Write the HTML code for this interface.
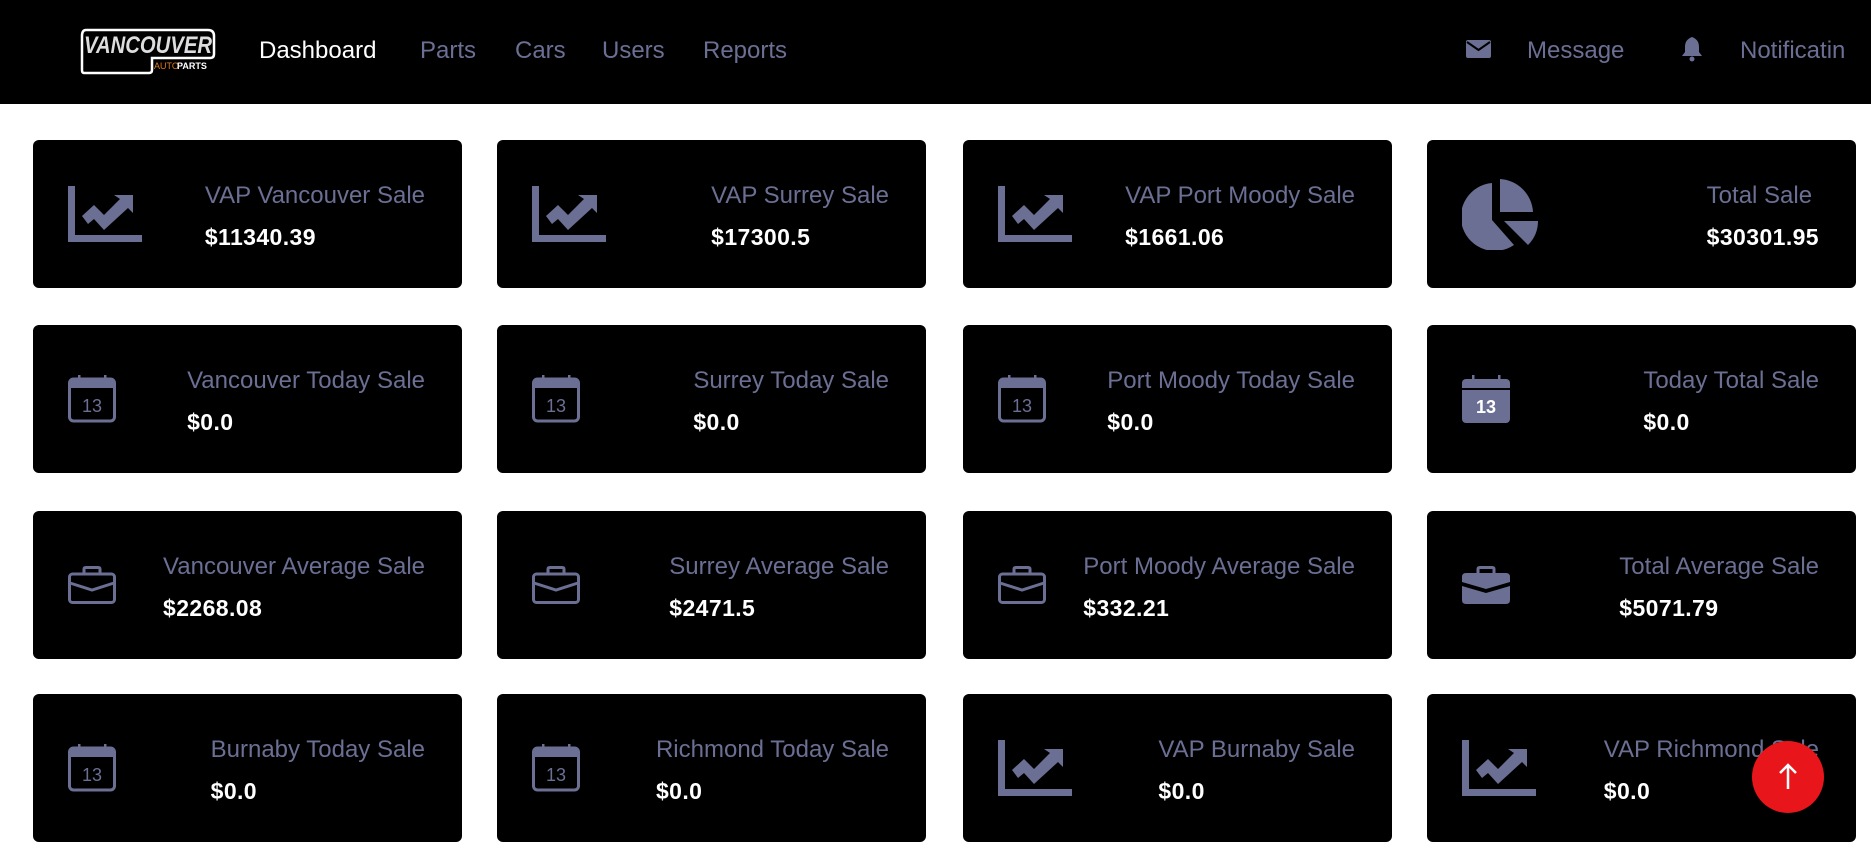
<!DOCTYPE html>
<html><head><meta charset="utf-8"><style>
*{margin:0;padding:0;box-sizing:border-box}
body{width:1871px;height:848px;background:#fff;font-family:"Liberation Sans",sans-serif;overflow:hidden;position:relative}
.nav{position:absolute;left:0;top:0;width:1871px;height:104px;background:#000}
.nav a{position:absolute;top:37px;font-size:24px;color:#6b6f93;text-decoration:none;white-space:nowrap}
.logo{position:absolute;left:80px;top:28px;width:136px;height:47px}
.card{position:absolute;width:429px;height:148px;background:#000;border-radius:6px}
.ic{position:absolute;left:35px;top:50%;transform:translateY(-50%)}
.tx{position:absolute;right:37px;top:42px}
.t{font-size:24px;color:#6b6f93;white-space:nowrap;line-height:28px}
.v{font-size:23px;font-weight:bold;color:#fff;margin-top:14px;letter-spacing:.4px}
.up{position:absolute;left:1752px;top:741px;width:72px;height:72px;border-radius:50%;background:#e8161b}
</style></head><body>
<div class="nav">
<svg class="logo" viewBox="0 0 136 47"><path d="M6 2H128Q134 2 134 8V26Q134 30 130 30H72V42Q72 45 69 45H4Q2 45 2 42V8Q2 2 6 2Z" fill="none" stroke="#fff" stroke-width="2.5"/><text x="68" y="25" text-anchor="middle" font-family="Liberation Sans" font-style="italic" font-weight="bold" font-size="24" fill="#ddd" textLength="128" lengthAdjust="spacingAndGlyphs">VANCOUVER</text><text x="74" y="41" font-family="Liberation Sans" font-size="9" fill="#e07a1e">AUTO</text><text x="97" y="41" font-family="Liberation Sans" font-weight="bold" font-size="9" fill="#fff">PARTS</text></svg>
<a style="left:259px;color:#fff">Dashboard</a>
<a style="left:420px">Parts</a>
<a style="left:515px">Cars</a>
<a style="left:602px">Users</a>
<a style="left:703px">Reports</a>
<svg style="position:absolute;left:1466px;top:40px" width="25" height="18" viewBox="0 0 25 18"><rect x="0" y="0" width="25" height="18" rx="2" fill="#6b6f93"/><path d="M1 2L12.5 10L24 2" fill="none" stroke="#000" stroke-width="2"/></svg>
<a style="left:1527px">Message</a>
<svg style="position:absolute;left:1681px;top:36px" width="22" height="26" viewBox="0 0 22 26"><path d="M11 1C6 3 4 6 4 11V16L1 20H21L18 16V11C18 6 16 3 11 1Z" fill="#6b6f93"/><circle cx="11" cy="23" r="2.5" fill="#6b6f93"/></svg>
<a style="left:1740px">Notificatin</a>
</div>

<!-- row 1 -->
<div class="card" style="left:33px;top:140px"><svg class="ic" width="74" height="56" viewBox="0 0 74 56"><path d="M0 0H7V49H74V56H0Z" fill="#6b6f93"/><path d="M14 30L26 19L36 29L52 13L46 9H65V27L60 22L36 44L26 33L20 38Z" fill="#6b6f93"/></svg><div class="tx"><div class="t">VAP Vancouver Sale</div><div class="v">$11340.39</div></div></div>
<div class="card" style="left:497px;top:140px"><svg class="ic" width="74" height="56" viewBox="0 0 74 56"><path d="M0 0H7V49H74V56H0Z" fill="#6b6f93"/><path d="M14 30L26 19L36 29L52 13L46 9H65V27L60 22L36 44L26 33L20 38Z" fill="#6b6f93"/></svg><div class="tx"><div class="t">VAP Surrey Sale</div><div class="v">$17300.5</div></div></div>
<div class="card" style="left:963px;top:140px"><svg class="ic" width="74" height="56" viewBox="0 0 74 56"><path d="M0 0H7V49H74V56H0Z" fill="#6b6f93"/><path d="M14 30L26 19L36 29L52 13L46 9H65V27L60 22L36 44L26 33L20 38Z" fill="#6b6f93"/></svg><div class="tx"><div class="t">VAP Port Moody Sale</div><div class="v">$1661.06</div></div></div>
<div class="card" style="left:1427px;top:140px"><svg class="ic" width="78" height="72" viewBox="0 0 78 72"><path d="M30 5A34 34 0 1 0 52 67L30 42Z" fill="#6b6f93"/><path d="M38 1A35 35 0 0 1 71 34H38Z" fill="#6b6f93"/><path d="M42 43H76A34 34 0 0 1 66 67Z" fill="#6b6f93"/></svg><div class="tx"><div class="t">Total Sale</div><div class="v">$30301.95</div></div></div>

<!-- row 2 -->
<div class="card" style="left:33px;top:325px"><svg class="ic" width="48" height="48" viewBox="0 0 48 48"><rect x="1.5" y="4" width="45" height="42" rx="4" fill="none" stroke="#6b6f93" stroke-width="3"/><rect x="1.5" y="4" width="45" height="9" fill="#6b6f93"/><rect x="10" y="0" width="2.5" height="5" fill="#6b6f93"/><rect x="36" y="0" width="2.5" height="5" fill="#6b6f93"/><text x="24" y="37" text-anchor="middle" font-family="Liberation Sans" font-size="18" fill="#6b6f93">13</text></svg><div class="tx"><div class="t">Vancouver Today Sale</div><div class="v">$0.0</div></div></div>
<div class="card" style="left:497px;top:325px"><svg class="ic" width="48" height="48" viewBox="0 0 48 48"><rect x="1.5" y="4" width="45" height="42" rx="4" fill="none" stroke="#6b6f93" stroke-width="3"/><rect x="1.5" y="4" width="45" height="9" fill="#6b6f93"/><rect x="10" y="0" width="2.5" height="5" fill="#6b6f93"/><rect x="36" y="0" width="2.5" height="5" fill="#6b6f93"/><text x="24" y="37" text-anchor="middle" font-family="Liberation Sans" font-size="18" fill="#6b6f93">13</text></svg><div class="tx"><div class="t">Surrey Today Sale</div><div class="v">$0.0</div></div></div>
<div class="card" style="left:963px;top:325px"><svg class="ic" width="48" height="48" viewBox="0 0 48 48"><rect x="1.5" y="4" width="45" height="42" rx="4" fill="none" stroke="#6b6f93" stroke-width="3"/><rect x="1.5" y="4" width="45" height="9" fill="#6b6f93"/><rect x="10" y="0" width="2.5" height="5" fill="#6b6f93"/><rect x="36" y="0" width="2.5" height="5" fill="#6b6f93"/><text x="24" y="37" text-anchor="middle" font-family="Liberation Sans" font-size="18" fill="#6b6f93">13</text></svg><div class="tx"><div class="t">Port Moody Today Sale</div><div class="v">$0.0</div></div></div>
<div class="card" style="left:1427px;top:325px"><svg class="ic" width="48" height="48" viewBox="0 0 48 48"><rect x="0" y="4" width="48" height="44" rx="4" fill="#6b6f93"/><rect x="0" y="13" width="48" height="2" fill="#000"/><rect x="10" y="0" width="2.5" height="5" fill="#6b6f93"/><rect x="36" y="0" width="2.5" height="5" fill="#6b6f93"/><text x="24" y="38" text-anchor="middle" font-family="Liberation Sans" font-weight="bold" font-size="18" fill="#fff">13</text></svg><div class="tx"><div class="t">Today Total Sale</div><div class="v">$0.0</div></div></div>

<!-- row 3 -->
<div class="card" style="left:33px;top:511px"><svg class="ic" width="48" height="38" viewBox="0 0 48 38"><rect x="1.5" y="8" width="45" height="28.5" rx="3" fill="none" stroke="#6b6f93" stroke-width="3"/><path d="M16 8V3Q16 1.5 18 1.5H30Q32 1.5 32 3V8" fill="none" stroke="#6b6f93" stroke-width="3"/><path d="M2 17L24 24L46 17" fill="none" stroke="#6b6f93" stroke-width="3"/></svg><div class="tx"><div class="t">Vancouver Average Sale</div><div class="v">$2268.08</div></div></div>
<div class="card" style="left:497px;top:511px"><svg class="ic" width="48" height="38" viewBox="0 0 48 38"><rect x="1.5" y="8" width="45" height="28.5" rx="3" fill="none" stroke="#6b6f93" stroke-width="3"/><path d="M16 8V3Q16 1.5 18 1.5H30Q32 1.5 32 3V8" fill="none" stroke="#6b6f93" stroke-width="3"/><path d="M2 17L24 24L46 17" fill="none" stroke="#6b6f93" stroke-width="3"/></svg><div class="tx"><div class="t">Surrey Average Sale</div><div class="v">$2471.5</div></div></div>
<div class="card" style="left:963px;top:511px"><svg class="ic" width="48" height="38" viewBox="0 0 48 38"><rect x="1.5" y="8" width="45" height="28.5" rx="3" fill="none" stroke="#6b6f93" stroke-width="3"/><path d="M16 8V3Q16 1.5 18 1.5H30Q32 1.5 32 3V8" fill="none" stroke="#6b6f93" stroke-width="3"/><path d="M2 17L24 24L46 17" fill="none" stroke="#6b6f93" stroke-width="3"/></svg><div class="tx"><div class="t">Port Moody Average Sale</div><div class="v">$332.21</div></div></div>
<div class="card" style="left:1427px;top:511px"><svg class="ic" width="48" height="38" viewBox="0 0 48 38"><path d="M0 11Q0 7 4 7H44Q48 7 48 11V16L24 23L0 16Z" fill="#6b6f93"/><path d="M0 20L24 27L48 20V34Q48 38 44 38H4Q0 38 0 34Z" fill="#6b6f93"/><path d="M16 7V3Q16 1.5 18 1.5H30Q32 1.5 32 3V7" fill="none" stroke="#6b6f93" stroke-width="3"/></svg><div class="tx"><div class="t">Total Average Sale</div><div class="v">$5071.79</div></div></div>

<!-- row 4 -->
<div class="card" style="left:33px;top:694px"><svg class="ic" width="48" height="48" viewBox="0 0 48 48"><rect x="1.5" y="4" width="45" height="42" rx="4" fill="none" stroke="#6b6f93" stroke-width="3"/><rect x="1.5" y="4" width="45" height="9" fill="#6b6f93"/><rect x="10" y="0" width="2.5" height="5" fill="#6b6f93"/><rect x="36" y="0" width="2.5" height="5" fill="#6b6f93"/><text x="24" y="37" text-anchor="middle" font-family="Liberation Sans" font-size="18" fill="#6b6f93">13</text></svg><div class="tx"><div class="t">Burnaby Today Sale</div><div class="v">$0.0</div></div></div>
<div class="card" style="left:497px;top:694px"><svg class="ic" width="48" height="48" viewBox="0 0 48 48"><rect x="1.5" y="4" width="45" height="42" rx="4" fill="none" stroke="#6b6f93" stroke-width="3"/><rect x="1.5" y="4" width="45" height="9" fill="#6b6f93"/><rect x="10" y="0" width="2.5" height="5" fill="#6b6f93"/><rect x="36" y="0" width="2.5" height="5" fill="#6b6f93"/><text x="24" y="37" text-anchor="middle" font-family="Liberation Sans" font-size="18" fill="#6b6f93">13</text></svg><div class="tx"><div class="t">Richmond Today Sale</div><div class="v">$0.0</div></div></div>
<div class="card" style="left:963px;top:694px"><svg class="ic" width="74" height="56" viewBox="0 0 74 56"><path d="M0 0H7V49H74V56H0Z" fill="#6b6f93"/><path d="M14 30L26 19L36 29L52 13L46 9H65V27L60 22L36 44L26 33L20 38Z" fill="#6b6f93"/></svg><div class="tx"><div class="t">VAP Burnaby Sale</div><div class="v">$0.0</div></div></div>
<div class="card" style="left:1427px;top:694px"><svg class="ic" width="74" height="56" viewBox="0 0 74 56"><path d="M0 0H7V49H74V56H0Z" fill="#6b6f93"/><path d="M14 30L26 19L36 29L52 13L46 9H65V27L60 22L36 44L26 33L20 38Z" fill="#6b6f93"/></svg><div class="tx"><div class="t">VAP Richmond Sale</div><div class="v">$0.0</div></div></div>

<div class="up"><svg width="72" height="72" viewBox="0 0 72 72"><path d="M36 48V24M28 32L36 24L44 32" fill="none" stroke="#fff" stroke-width="2.5"/></svg></div>
</body></html>
